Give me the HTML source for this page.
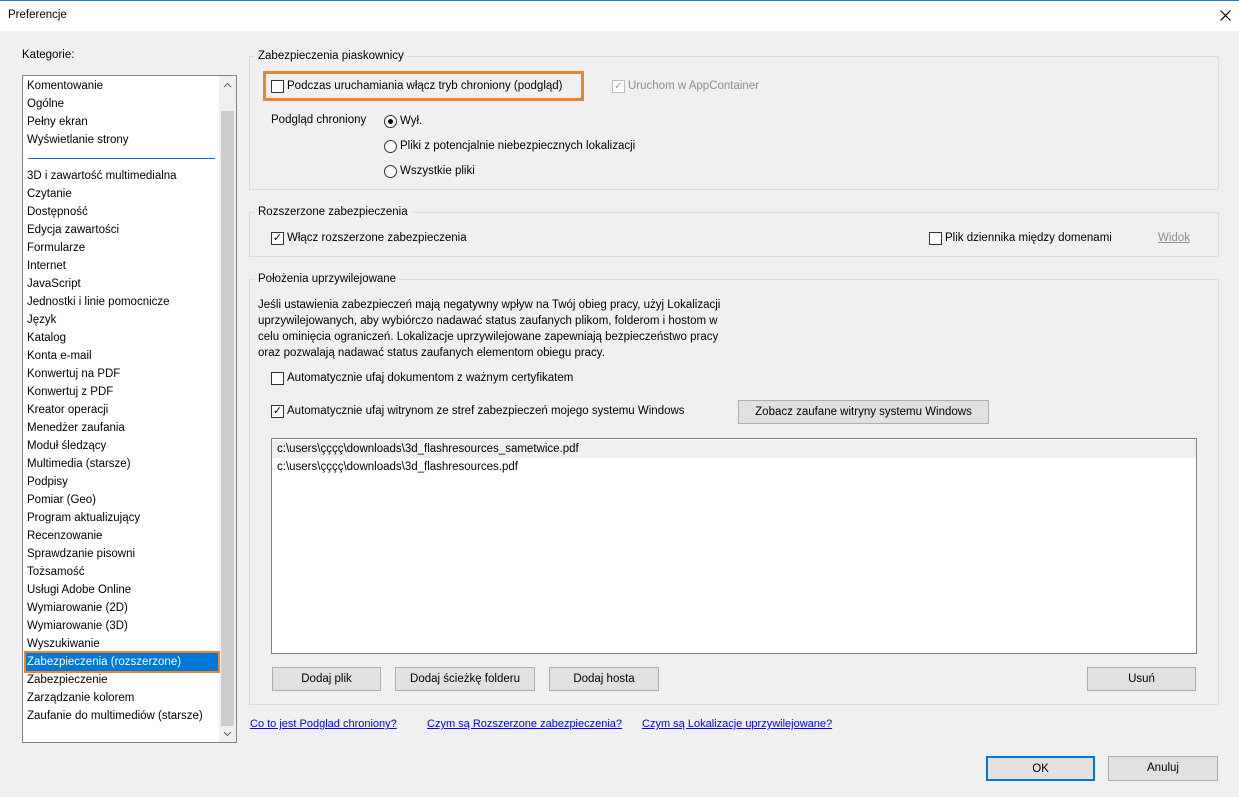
<!DOCTYPE html>
<html><head><meta charset="utf-8"><style>
*{box-sizing:border-box;margin:0;padding:0}
body{width:1239px;height:797px;background:#f0f0f0;font-family:"Liberation Sans",sans-serif;font-size:11.5px;color:#000;position:relative;overflow:hidden}
.a{position:absolute;white-space:nowrap}
.title{left:0;top:0;width:1239px;height:31px;background:#fff;border-top:1px solid #1979ca}
.list{left:22px;top:75px;width:215px;height:668px;background:#fff;border:1px solid #828282}
.it{position:absolute;left:4px;height:18px;line-height:18px}
.grp{border:1px solid #dcdcdc;position:absolute}
.gl{position:absolute;background:#f0f0f0;padding:0 3px;line-height:14px}
.cb{position:absolute;width:13px;height:13px;border:1px solid #333;background:#fff}
.rb{position:absolute;width:13px;height:13px;border:1px solid #333;border-radius:50%;background:#fff}
.btn{position:absolute;height:24px;background:#e1e1e1;border:1px solid #adadad;text-align:center;line-height:22px}
.lnk{position:absolute;color:#0000ee;text-decoration:underline;white-space:nowrap;font-size:11px}
</style></head><body>
<div class="a title"><span style="position:absolute;left:8px;top:8px">Preferencje</span>
<svg style="position:absolute;left:1220px;top:9px" width="11" height="11"><path d="M0.5 0.5L10.5 10.5M10.5 0.5L0.5 10.5" stroke="#000" stroke-width="1.2"/></svg></div>
<div class="a" style="left:22px;top:49px">Kategorie:</div>
<div class="a list">
<div style="position:absolute;left:196px;top:0;width:17px;height:666px;background:#f0f0f0"></div>
<div style="position:absolute;left:198px;top:35px;width:13px;height:615px;background:#cdcdcd"></div>
<svg style="position:absolute;left:200px;top:6px" width="9" height="6"><path d="M1 5L4.5 1.5L8 5" stroke="#606060" fill="none"/></svg>
<svg style="position:absolute;left:200px;top:655px" width="9" height="6"><path d="M1 1L4.5 4.5L8 1" stroke="#606060" fill="none"/></svg>
<div style="position:absolute;left:5px;top:82px;width:187px;height:1px;background:#1a6db8"></div>
<div class="it" style="top:1px">Komentowanie</div>
<div class="it" style="top:19px">Ogólne</div>
<div class="it" style="top:37px">Pełny ekran</div>
<div class="it" style="top:55px">Wyświetlanie strony</div>
<div class="it" style="top:91px">3D i zawartość multimedialna</div>
<div class="it" style="top:109px">Czytanie</div>
<div class="it" style="top:127px">Dostępność</div>
<div class="it" style="top:145px">Edycja zawartości</div>
<div class="it" style="top:163px">Formularze</div>
<div class="it" style="top:181px">Internet</div>
<div class="it" style="top:199px">JavaScript</div>
<div class="it" style="top:217px">Jednostki i linie pomocnicze</div>
<div class="it" style="top:235px">Język</div>
<div class="it" style="top:253px">Katalog</div>
<div class="it" style="top:271px">Konta e-mail</div>
<div class="it" style="top:289px">Konwertuj na PDF</div>
<div class="it" style="top:307px">Konwertuj z PDF</div>
<div class="it" style="top:325px">Kreator operacji</div>
<div class="it" style="top:343px">Menedżer zaufania</div>
<div class="it" style="top:361px">Moduł śledzący</div>
<div class="it" style="top:379px">Multimedia (starsze)</div>
<div class="it" style="top:397px">Podpisy</div>
<div class="it" style="top:415px">Pomiar (Geo)</div>
<div class="it" style="top:433px">Program aktualizujący</div>
<div class="it" style="top:451px">Recenzowanie</div>
<div class="it" style="top:469px">Sprawdzanie pisowni</div>
<div class="it" style="top:487px">Tożsamość</div>
<div class="it" style="top:505px">Usługi Adobe Online</div>
<div class="it" style="top:523px">Wymiarowanie (2D)</div>
<div class="it" style="top:541px">Wymiarowanie (3D)</div>
<div class="it" style="top:559px">Wyszukiwanie</div>
<div style="position:absolute;left:1px;top:575px;width:196px;height:22px;border:2px solid #f08228;background:#0078d7"></div>
<div class="it" style="top:577px;color:#fff">Zabezpieczenia (rozszerzone)</div>
<div class="it" style="top:595px">Zabezpieczenie</div>
<div class="it" style="top:613px">Zarządzanie kolorem</div>
<div class="it" style="top:631px">Zaufanie do multimediów (starsze)</div>
</div>

<div class="grp" style="left:249px;top:56px;width:970px;height:134px"></div>
<div class="gl" style="left:255px;top:49px">Zabezpieczenia piaskownicy</div>
<div style="position:absolute;left:263px;top:71px;width:321px;height:30px;border:3px solid #f08228"></div>
<div class="cb" style="left:271px;top:80px"></div>
<div class="a" style="left:287px;top:80px">Podczas uruchamiania włącz tryb chroniony (podgląd)</div>
<div class="cb" style="left:612px;top:80px;border-color:#bcbcbc;color:#9a9a9a;font-size:10px;line-height:11px;text-align:center">✓</div>
<div class="a" style="left:628px;top:80px;color:#8d8d8d">Uruchom w AppContainer</div>
<div class="a" style="left:271px;top:114px">Podgląd chroniony</div>
<div class="rb" style="left:384px;top:115px"><div style="position:absolute;left:3px;top:3px;width:5px;height:5px;border-radius:50%;background:#000"></div></div>
<div class="a" style="left:400px;top:115px">Wył.</div>
<div class="rb" style="left:384px;top:140px"></div>
<div class="a" style="left:400px;top:140px">Pliki z potencjalnie niebezpiecznych lokalizacji</div>
<div class="rb" style="left:384px;top:165px"></div>
<div class="a" style="left:400px;top:165px">Wszystkie pliki</div>

<div class="grp" style="left:249px;top:212px;width:970px;height:45px"></div>
<div class="gl" style="left:255px;top:205px">Rozszerzone zabezpieczenia</div>
<div class="cb" style="left:271px;top:232px;font-size:11px;line-height:11px;text-align:center">✓</div>
<div class="a" style="left:287px;top:232px">Włącz rozszerzone zabezpieczenia</div>
<div class="cb" style="left:929px;top:232px"></div>
<div class="a" style="left:945px;top:232px">Plik dziennika między domenami</div>
<div class="a" style="left:1158px;top:232px;color:#8d8d8d;text-decoration:underline">Widok</div>

<div class="grp" style="left:249px;top:279px;width:970px;height:426px"></div>
<div class="gl" style="left:255px;top:272px">Położenia uprzywilejowane</div>
<div class="a" style="left:258px;top:297px;line-height:16px">Jeśli ustawienia zabezpieczeń mają negatywny wpływ na Twój obieg pracy, użyj Lokalizacji<br>uprzywilejowanych, aby wybiórczo nadawać status zaufanych plikom, folderom i hostom w<br>celu ominięcia ograniczeń. Lokalizacje uprzywilejowane zapewniają bezpieczeństwo pracy<br>oraz pozwalają nadawać status zaufanych elementom obiegu pracy.</div>
<div class="cb" style="left:271px;top:372px"></div>
<div class="a" style="left:287px;top:372px">Automatycznie ufaj dokumentom z ważnym certyfikatem</div>
<div class="cb" style="left:271px;top:405px;font-size:11px;line-height:11px;text-align:center">✓</div>
<div class="a" style="left:287px;top:405px">Automatycznie ufaj witrynom ze stref zabezpieczeń mojego systemu Windows</div>
<div class="btn" style="left:738px;top:400px;width:251px">Zobacz zaufane witryny systemu Windows</div>
<div style="position:absolute;left:271px;top:438px;width:926px;height:216px;background:#fff;border:1px solid #828282">
<div style="position:absolute;left:0;top:1px;width:924px;height:18px;background:#f0f0f0"></div>
<div class="a" style="left:5px;top:4px">c:\users\çççç\downloads\3d_flashresources_sametwice.pdf</div>
<div class="a" style="left:5px;top:22px">c:\users\çççç\downloads\3d_flashresources.pdf</div>
</div>
<div class="btn" style="left:272px;top:667px;width:109px">Dodaj plik</div>
<div class="btn" style="left:395px;top:667px;width:140px">Dodaj ścieżkę folderu</div>
<div class="btn" style="left:549px;top:667px;width:110px">Dodaj hosta</div>
<div class="btn" style="left:1087px;top:667px;width:109px">Usuń</div>
<div class="lnk" style="left:250px;top:718px">Co to jest Podglad chroniony?</div>
<div class="lnk" style="left:427px;top:718px">Czym są Rozszerzone zabezpieczenia?</div>
<div class="lnk" style="left:642px;top:718px">Czym są Lokalizacje uprzywilejowane?</div>
<div class="btn" style="left:986px;top:756px;width:109px;height:25px;border:2px solid #0078d7">OK</div>
<div class="btn" style="left:1108px;top:756px;width:110px;height:25px">Anuluj</div>
</body></html>
